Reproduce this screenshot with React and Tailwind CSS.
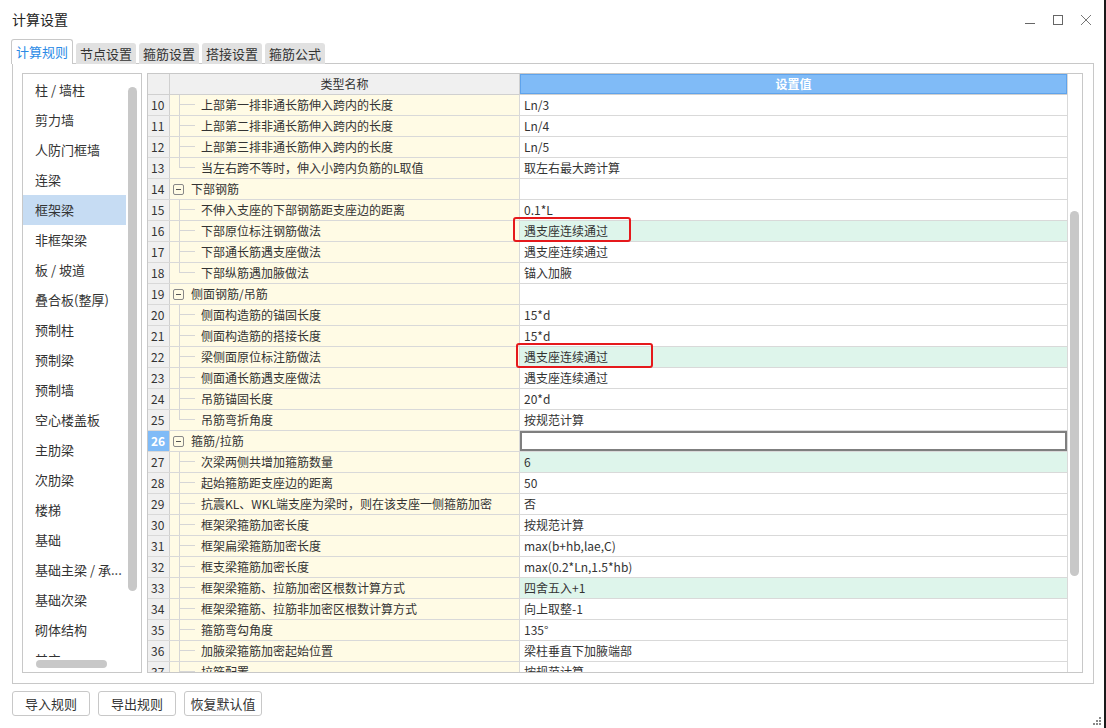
import React from "react";

const listItems = [
  "柱 / 墙柱",
  "剪力墙",
  "人防门框墙",
  "连梁",
  "框架梁",
  "非框架梁",
  "板 / 坡道",
  "叠合板(整厚)",
  "预制柱",
  "预制梁",
  "预制墙",
  "空心楼盖板",
  "主肋梁",
  "次肋梁",
  "楼梯",
  "基础",
  "基础主梁 / 承...",
  "基础次梁",
  "砌体结构",
  "其它",
];

// t: "c" child, "g" group, last: last child of group
const rows = [
  { n: 10, t: "c", name: "上部第一排非通长筋伸入跨内的长度", v: "Ln/3" },
  { n: 11, t: "c", name: "上部第二排非通长筋伸入跨内的长度", v: "Ln/4" },
  { n: 12, t: "c", name: "上部第三排非通长筋伸入跨内的长度", v: "Ln/5" },
  { n: 13, t: "c", last: true, name: "当左右跨不等时，伸入小跨内负筋的L取值", v: "取左右最大跨计算" },
  { n: 14, t: "g", name: "下部钢筋", v: "" },
  { n: 15, t: "c", name: "不伸入支座的下部钢筋距支座边的距离", v: "0.1*L" },
  { n: 16, t: "c", name: "下部原位标注钢筋做法", v: "遇支座连续通过", green: true, box: 1 },
  { n: 17, t: "c", name: "下部通长筋遇支座做法", v: "遇支座连续通过" },
  { n: 18, t: "c", last: true, name: "下部纵筋遇加腋做法", v: "锚入加腋" },
  { n: 19, t: "g", name: "侧面钢筋/吊筋", v: "" },
  { n: 20, t: "c", name: "侧面构造筋的锚固长度", v: "15*d" },
  { n: 21, t: "c", name: "侧面构造筋的搭接长度", v: "15*d" },
  { n: 22, t: "c", name: "梁侧面原位标注筋做法", v: "遇支座连续通过", green: true, box: 2 },
  { n: 23, t: "c", name: "侧面通长筋遇支座做法", v: "遇支座连续通过" },
  { n: 24, t: "c", name: "吊筋锚固长度", v: "20*d" },
  { n: 25, t: "c", last: true, name: "吊筋弯折角度", v: "按规范计算" },
  { n: 26, t: "g", name: "箍筋/拉筋", v: "", sel: true },
  { n: 27, t: "c", name: "次梁两侧共增加箍筋数量", v: "6", green: true },
  { n: 28, t: "c", name: "起始箍筋距支座边的距离", v: "50" },
  { n: 29, t: "c", name: "抗震KL、WKL端支座为梁时，则在该支座一侧箍筋加密", v: "否" },
  { n: 30, t: "c", name: "框架梁箍筋加密长度", v: "按规范计算" },
  { n: 31, t: "c", name: "框架扁梁箍筋加密长度", v: "max(b+hb,lae,C)" },
  { n: 32, t: "c", name: "框支梁箍筋加密长度", v: "max(0.2*Ln,1.5*hb)" },
  { n: 33, t: "c", name: "框架梁箍筋、拉筋加密区根数计算方式", v: "四舍五入+1", green: true },
  { n: 34, t: "c", name: "框架梁箍筋、拉筋非加密区根数计算方式", v: "向上取整-1" },
  { n: 35, t: "c", name: "箍筋弯勾角度", v: "135°" },
  { n: 36, t: "c", name: "加腋梁箍筋加密起始位置", v: "梁柱垂直下加腋端部" },
  { n: 37, t: "c", name: "拉筋配置", v: "按规范计算" },
];

const Tree = ({ last }) => (
  <div className="w-[16px] h-full flex flex-col ml-[9px] shrink-0">
    <div className="h-[10px] border-l border-b border-[#d6d6d6]" />
    <div className={last ? "flex-1" : "flex-1 border-l border-[#d6d6d6]"} />
  </div>
);

const Row = ({ r }) => (
  <div className="flex h-[21px] border-b border-[#d9d9d9] text-[12px] leading-[20px] text-[#333]">
    <div
      className={
        r.sel
          ? "w-[22px] shrink-0 bg-[#80bbf7] text-white font-bold pl-[3px] border-r border-[#d0d0d0]"
          : "w-[22px] shrink-0 bg-[#f0f0f0] pl-[3px] border-r border-[#d0d0d0]"
      }
    >
      {r.n}
    </div>
    <div className="w-[350px] shrink-0 bg-[#fffbe5] border-r border-[#d9d9d9] flex items-stretch">
      {r.t === "g" ? (
        <div className="flex items-center">
          <div className="ml-[3px] w-[11px] h-[11px] border border-[#888] rounded-[2px] flex items-center justify-center">
            <div className="w-[5px] h-px bg-[#555]" />
          </div>
          <span className="ml-[7px]">{r.name}</span>
        </div>
      ) : (
        <>
          <Tree last={r.last} />
          <span className="ml-[6px] whitespace-nowrap">{r.name}</span>
        </>
      )}
    </div>
    <div
      className={
        r.sel
          ? "flex-1 border-2 border-[#7f7f7f] bg-white"
          : r.green
          ? "flex-1 bg-[#def5eb] pl-[4px] relative"
          : "flex-1 bg-white pl-[4px] relative"
      }
    >
      {r.v}
      {r.box === 1 && (
        <div className="absolute left-[-7px] top-[-4px] w-[118px] h-[25px] border-2 border-[#e5191c] rounded-[3px]" />
      )}
      {r.box === 2 && (
        <div className="absolute left-[-4px] top-[-4px] w-[137px] h-[25px] border-2 border-[#e5191c] rounded-[3px]" />
      )}
    </div>
  </div>
);

export default function App() {
  return (
    <div className="w-[1106px] h-[728px] bg-white border-r-2 border-[#1a1a1a] font-['Noto_Sans_CJK_SC','Noto_Sans',sans-serif] text-[#333] overflow-hidden flex flex-col relative">
      {/* TITLE BAR */}
      <div className="h-[39px] flex items-center justify-between pl-[12px] pr-[12px] shrink-0">
        <span className="text-[14px] text-[#222]">计算设置</span>
        <div className="flex items-center gap-[16px]">
          <svg width="12" height="12" viewBox="0 0 12 12">
            <path d="M1 9.5H11" stroke="#666" strokeWidth="1" />
          </svg>
          <svg width="12" height="12" viewBox="0 0 12 12">
            <rect x="1.5" y="1.5" width="9" height="9" fill="none" stroke="#666" strokeWidth="1" />
          </svg>
          <svg width="12" height="12" viewBox="0 0 12 12">
            <path d="M1 1L11 11M11 1L1 11" stroke="#777" strokeWidth="1" />
          </svg>
        </div>
      </div>

      {/* TABS */}
      <div className="flex items-end pl-[11px] gap-[3px] h-[25px] shrink-0 relative z-10">
        <div className="w-[62px] h-[25px] bg-white border border-b-0 border-[#c8c8c8] rounded-t-[3px] flex items-center justify-center text-[13px] text-[#2b8ae6]">
          计算规则
        </div>
        {["节点设置", "箍筋设置", "搭接设置", "箍筋公式"].map((t) => (
          <div
            key={t}
            className="w-[60px] h-[21px] bg-[#e1e1e1] rounded-t-[3px] flex items-center justify-center text-[13px] text-[#333]"
          >
            {t}
          </div>
        ))}
      </div>

      {/* PANEL */}
      <div className="ml-[12px] w-[1082px] h-[621px] border border-[#c8c8c8] -mt-px flex gap-[5px] pt-[9px] pl-[9px] shrink-0">
        {/* LEFT LIST */}
        <div className="w-[120px] h-[600px] border border-[#c8c8c8] flex flex-col shrink-0">
          <div className="flex h-[583px]">
            <div className="w-[103px] overflow-hidden flex flex-col pt-px">
              {listItems.map((it, i) => (
                <div
                  key={it}
                  className={
                    i === 4
                      ? "h-[30px] shrink-0 flex items-center pl-[12px] text-[13px] bg-[#c6dcf3] whitespace-nowrap"
                      : "h-[30px] shrink-0 flex items-center pl-[12px] text-[13px] whitespace-nowrap"
                  }
                >
                  {it}
                </div>
              ))}
            </div>
            <div className="flex-1 pt-[13px] pl-[2px]">
              <div className="w-[9px] h-[504px] bg-[#c8c8c8] rounded-[5px]" />
            </div>
          </div>
          <div className="h-[15px] pl-[13px] pt-[3px]">
            <div className="w-[71px] h-[8px] bg-[#c8c8c8] rounded-[4px]" />
          </div>
        </div>

        {/* TABLE */}
        <div className="w-[936px] h-[600px] border border-[#c8c8c8] flex shrink-0 overflow-hidden">
          <div className="w-[919px] flex flex-col overflow-hidden">
            <div className="flex h-[21px] shrink-0 text-[12px] leading-[20px] border-b border-[#d0d0d0]">
              <div className="w-[22px] bg-[#f0f0f0] border-r border-[#d0d0d0]" />
              <div className="w-[350px] bg-[#f0f0f0] border-r border-[#d0d0d0] text-center text-[#333]">
                类型名称
              </div>
              <div className="flex-1 bg-[#80bbf7] border border-[#5ea3ec] text-center text-white font-bold leading-[18px]">
                设置值
              </div>
            </div>
            {rows.map((r) => (
              <Row key={r.n} r={r} />
            ))}
          </div>
          <div className="flex-1 border-l border-[#d9d9d9] pt-[137px] pl-[2px]">
            <div className="w-[9px] h-[365px] bg-[#c8c8c8] rounded-[5px]" />
          </div>
        </div>
      </div>

      {/* BUTTONS */}
      <div className="flex gap-[8px] pl-[12px] pt-[7px]">
        {["导入规则", "导出规则", "恢复默认值"].map((b) => (
          <button
            key={b}
            className="w-[78px] h-[25px] border border-[#c8c8c8] rounded-[3px] bg-white text-[13px] text-[#333] flex items-center justify-center"
          >
            {b}
          </button>
        ))}
      </div>

      {/* RESIZE GRIP */}
      <svg className="absolute right-[3px] bottom-[3px]" width="8" height="8" viewBox="0 0 8 8">
        <rect x="6" y="0" width="2" height="2" fill="#888" />
        <rect x="3" y="3" width="2" height="2" fill="#888" />
        <rect x="6" y="3" width="2" height="2" fill="#888" />
        <rect x="0" y="6" width="2" height="2" fill="#888" />
        <rect x="3" y="6" width="2" height="2" fill="#888" />
        <rect x="6" y="6" width="2" height="2" fill="#888" />
      </svg>
    </div>
  );
}
